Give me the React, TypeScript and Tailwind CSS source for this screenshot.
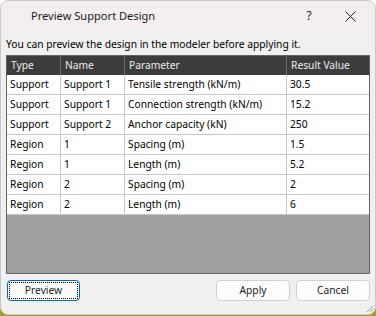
import React from "react";

const rows: [string, string, string, string][] = [
  ["Support", "Support 1", "Tensile strength (kN/m)", "30.5"],
  ["Support", "Support 1", "Connection strength (kN/m)", "15.2"],
  ["Support", "Support 2", "Anchor capacity (kN)", "250"],
  ["Region", "1", "Spacing (m)", "1.5"],
  ["Region", "1", "Length (m)", "5.2"],
  ["Region", "2", "Spacing (m)", "2"],
  ["Region", "2", "Length (m)", "6"],
];

export default function App() {
  return (
    <div
      className="w-[376px] h-[316px] bg-[linear-gradient(to_bottom,#ffffff_84%,#a99b2e_84%)] text-[10.25px] text-black"
      style={{ fontFamily: '"Noto Sans", "Open Sans", sans-serif' }}
    >
      <div className="w-[376px] h-[315px] rounded-[8px] border border-[#c8c8c8] overflow-hidden bg-[#f0f0f0] flex flex-col relative">
        {/* title bar */}
        <div className="h-[30px] bg-[#f4efef] flex items-center shrink-0">
          <div className="ml-[30px] text-[11.1px] text-[#1b1b1b] leading-none">Preview Support Design</div>
          <div className="ml-auto flex items-center">
            <div className="w-[20px] text-center text-[12px] text-[#1b1b1b] mr-[26px] leading-none">?</div>
            <svg width="11" height="11" viewBox="0 0 11 11" className="mr-[19px]">
              <path d="M0.5 0.5 L10.5 10.5 M10.5 0.5 L0.5 10.5" stroke="#1b1b1b" strokeWidth="1" fill="none" />
            </svg>
          </div>
        </div>
        {/* content */}
        <div className="flex flex-col px-[5px]">
          <div className="mt-[5px] leading-[16px] whitespace-nowrap">
            You can preview the design in the modeler before applying it.
          </div>
          <div className="mt-[3px] w-[364px] h-[219px] border border-[#646464] bg-[#a0a0a0] flex flex-col">
            <div className="h-[19px] bg-[#3c3c3c] flex text-[#ececec] leading-[19px]">
              <div className="w-[54px] border-r border-[#6a6a6a] pl-[4px]">Type</div>
              <div className="w-[64px] border-r border-[#6a6a6a] pl-[4px]">Name</div>
              <div className="w-[162px] border-r border-[#6a6a6a] pl-[4px]">Parameter</div>
              <div className="flex-1 pl-[4px]">Result Value</div>
            </div>
            {rows.map((r, i) => (
              <div key={i} className="h-[20px] bg-white flex border-b border-[#c8c8c8] leading-[19px] whitespace-nowrap">
                <div className="w-[54px] border-r border-[#c8c8c8] pl-[3px]">{r[0]}</div>
                <div className="w-[64px] border-r border-[#c8c8c8] pl-[3px]">{r[1]}</div>
                <div className="w-[162px] border-r border-[#c8c8c8] pl-[3px]">{r[2]}</div>
                <div className="flex-1 pl-[3px]">{r[3]}</div>
              </div>
            ))}
          </div>
          {/* buttons */}
          <div className="mt-[6px] flex items-center">
            <button className="ml-[1px] w-[73px] h-[21px] rounded-[4px] border border-[#0067c0] bg-[#fdfdfd] p-[1px] flex">
              <span className="flex-1 border border-dotted border-black flex items-center justify-center leading-none text-[#1b1b1b]">
                Preview
              </span>
            </button>
            <button className="ml-auto w-[74px] h-[21px] rounded-[4px] border border-[#d0d0d0] bg-[#fdfdfd] flex items-center justify-center leading-none text-[#1b1b1b]">
              Apply
            </button>
            <button className="ml-[6px] w-[74px] h-[21px] rounded-[4px] border border-[#d0d0d0] bg-[#fdfdfd] flex items-center justify-center leading-none text-[#1b1b1b]">
              Cancel
            </button>
          </div>
        </div>
        {/* resize grip */}
        <svg width="10" height="10" viewBox="0 0 10 10" className="absolute right-[1px] bottom-[1px]">
          <path d="M9 3 L3 9 M9 6 L6 9" stroke="#a0a0a0" strokeWidth="1" fill="none" />
        </svg>
      </div>
    </div>
  );
}
